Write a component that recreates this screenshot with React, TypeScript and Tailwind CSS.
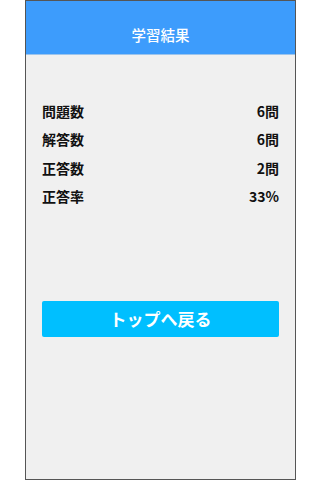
import React from "react";

const rows = [
  { label: "問題数", value: "6問" },
  { label: "解答数", value: "6問" },
  { label: "正答数", value: "2問" },
  { label: "正答率", value: "33%" },
];

export default function App() {
  return (
    <div
      className="w-[320px] h-[480px] bg-white"
      style={{ fontFamily: '"Noto Sans CJK JP", "Noto Sans", sans-serif' }}
    >
      <div className="ml-[25px] w-[271px] h-[480px] border border-[#555555] bg-[#f0f0f0] flex flex-col">
        <div className="h-[54px] bg-[#3d9cfc] border-b border-[#9cc4ec] flex items-center justify-center pt-[16px]">
          <span className="text-white text-[14.5px] font-medium leading-none">学習結果</span>
        </div>
        <div className="px-4 mt-[42px] flex flex-col">
          {rows.map((r) => (
            <div key={r.label} className="h-[28.5px] flex items-center justify-between text-[14px] font-bold text-[#111111]">
              <span>{r.label}</span>
              <span>{r.value}</span>
            </div>
          ))}
        </div>
        <div className="px-4 mt-[90px]">
          <button className="w-full h-[36px] bg-[#00bfff] text-white text-[17px] font-bold flex items-center justify-center rounded-[2px]">
            トップへ戻る
          </button>
        </div>
      </div>
    </div>
  );
}
